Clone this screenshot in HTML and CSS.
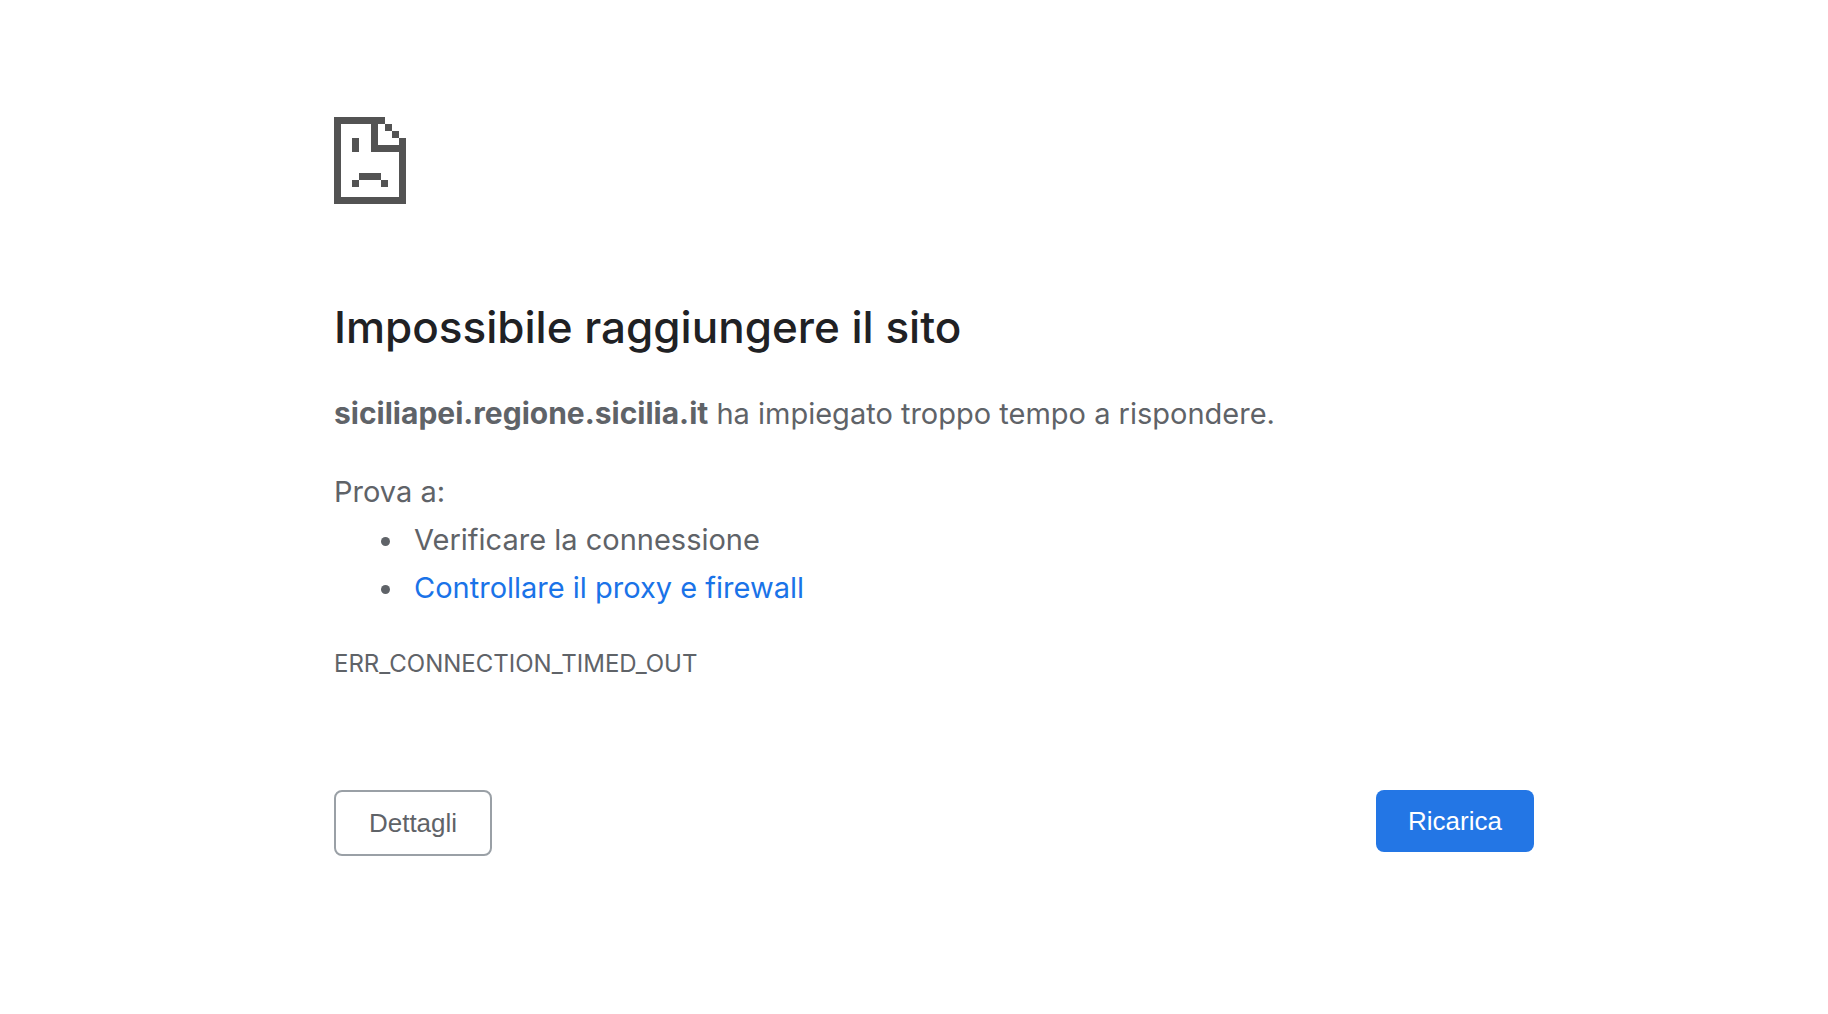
FILE: index.html
```
<!DOCTYPE html>
<html lang="it">
<head>
  <meta charset="UTF-8">
  <meta name="viewport" content="width=device-width, initial-scale=1.0">
  <title>siciliapei.regione.sicilia.it</title>
  <link rel="stylesheet" href="styles.css">
</head>
<body>
  <main class="interstitial">
    <svg class="icon" viewBox="0 0 72 87" fill="#535353" shape-rendering="crispEdges" aria-hidden="true">
      <!-- page outline with folded corner -->
      <path d="M0 0H51V7H44V28H65V21H72V87H0ZM7 7V80H65V35H37V7Z" fill-rule="evenodd"/>
      <path d="M51 7H58V14H51ZM58 14H65V21H58Z"/>
      <!-- face -->
      <path d="M18 21H25V35H18ZM25 56H47V63H25ZM18 63H25V70H18ZM47 63H54V70H47Z"/>
    </svg>

    <h1>Impossibile raggiungere il sito</h1>
    <p><strong>siciliapei.regione.sicilia.it</strong> ha impiegato troppo tempo a rispondere.</p>

    <div class="suggestions">
      <p>Prova a:</p>
      <ul>
        <li>Verificare la connessione</li>
        <li><a href="#buttons">Controllare il proxy e firewall</a></li>
      </ul>
    </div>

    <div class="error-code">ERR_CONNECTION_TIMED_OUT</div>

    <div class="buttons" id="buttons">
      <button type="button" class="details">Dettagli</button>
      <button type="button" class="reload">Ricarica</button>
    </div>
  </main>
</body>
</html>
```

FILE: styles.css
```
body {
  margin: 0;
  padding-left: 40px;
  background: #fff;
  color: #5f6368;
  font-family: Inter, "Liberation Sans", sans-serif;
  font-size: 29px;
  line-height: 48px;
}

.interstitial {
  max-width: 1200px;
  margin: 0 auto;
  padding-top: 117px;
}

.icon {
  display: block;
  width: 72px;
  height: 87px;
}

h1 {
  margin: 93px 0 32px;
  color: #202124;
  font-size: 44px;
  font-weight: 500;
  line-height: 60px;
}

p {
  margin: 0;
}

strong {
  font-size: 30px;
}

.suggestions {
  margin-top: 30px;
}

ul {
  margin: 0;
  padding-left: 72px;
}

li {
  padding-left: 8px;
}

a {
  color: #1a73e8;
  text-decoration: none;
}

.error-code {
  margin-top: 28px;
  font-size: 24px;
}

.buttons {
  display: flex;
  justify-content: space-between;
  align-items: flex-start;
  margin-top: 102px;
}

button {
  min-width: 158px;
  padding: 16px 32px;
  border: 0;
  border-radius: 8px;
  font-family: "Liberation Sans", Arial, sans-serif;
  font-size: 26px;
  line-height: 30px;
  cursor: pointer;
}

.details {
  border: 2px solid #9aa0a6;
  background: #fff;
  color: #5f6368;
}

.reload {
  background: #2376e5;
  color: #fff;
}
```
